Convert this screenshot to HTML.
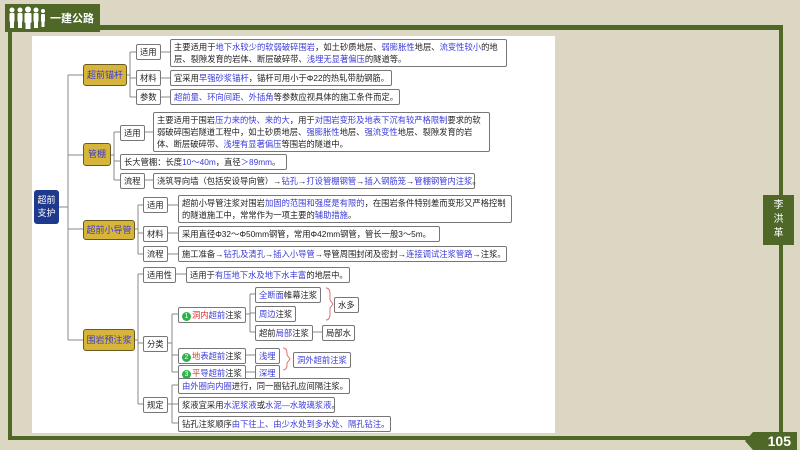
<!DOCTYPE html>
<html><head><meta charset="utf-8"><style>
*{margin:0;padding:0;box-sizing:border-box}
body{width:800px;height:450px;background:#dbd7c3;position:relative;overflow:hidden;font-family:"Liberation Sans","Noto Sans CJK SC",sans-serif;font-size:8.3px;color:#222}
.a{position:absolute}
.g{background:#4f6828}
.b{position:absolute;border:1px solid #777;border-radius:2px;background:#fff;line-height:12px;padding:1px 3px;white-space:nowrap}
.t{white-space:normal}
.y{background:#d7b53a;border:1.5px solid #6b5a20;color:#3a3ad0;border-radius:3px;text-align:center;padding:5px 0;white-space:nowrap;font-size:9px;line-height:11px}
i{font-style:normal;color:#3b3bd8}
s{text-decoration:none;color:#e03030}
.n{display:inline-block;width:9px;height:9px;border-radius:50%;background:#2cb24c;color:#fff;font-size:7px;line-height:9px;text-align:center;margin-right:1px}
</style></head><body>
<div class="a g" style="left:5px;top:4px;width:95px;height:28px"></div>
<svg class="a" style="left:7px;top:6px" width="40" height="24" fill="#fff">
<circle cx="5" cy="4" r="2.5"/><rect x="2.5" y="7" width="5" height="9" rx="1"/><rect x="3" y="15" width="4" height="7"/>
<circle cx="13" cy="4" r="2.5"/><rect x="10.5" y="7" width="5" height="9" rx="1"/><rect x="11" y="15" width="4" height="7"/>
<circle cx="21" cy="3.5" r="3"/><rect x="17.5" y="7" width="7" height="10" rx="1"/><rect x="18.5" y="16" width="5" height="7"/>
<circle cx="29" cy="4" r="2.5"/><rect x="26.5" y="7" width="5" height="9" rx="1"/><rect x="27" y="15" width="4" height="7"/>
<circle cx="36" cy="5" r="2"/><rect x="34" y="8" width="4" height="8" rx="1"/><rect x="34.5" y="15" width="3" height="6"/>
</svg>
<div class="a" style="left:50px;top:10px;color:#fff;font-size:11px;font-weight:bold">一建公路</div>
<div class="a g" style="left:100px;top:25px;width:683px;height:5px"></div>
<div class="a g" style="left:8px;top:30px;width:4px;height:410px"></div>
<div class="a g" style="left:779px;top:27px;width:4px;height:410px"></div>
<div class="a g" style="left:8px;top:436px;width:745px;height:4px"></div>
<div class="a" style="left:745px;top:432px;width:52px;height:18px;background:#4f6828;clip-path:polygon(8px 0,100% 0,100% 100%,8px 100%,0 50%);color:#fff;font-weight:bold;font-size:14px;text-align:right;padding-right:6px;line-height:18px">105</div>
<div class="a g" style="left:763px;top:195px;width:31px;height:50px;color:#fff;font-size:10px;text-align:center;line-height:14px;padding-top:4px">李<br>洪<br>革</div>
<div class="a" style="left:32px;top:36px;width:523px;height:397px;background:#fff"></div>

<svg class="a" style="left:0;top:0" width="800" height="450" fill="none" stroke="#888" stroke-width="1">
<path d="M58 207H68M68 75V340M68 75H83M68 155H83M68 229H83M68 340H83"/>
<path d="M126 75H130M130 52V97M130 52H136M130 78H136M130 97H136M160 52H170M160 78H170M160 97H170"/>
<path d="M110 155H114M114 132V180M114 132H120M114 161H120M114 180H120M144 132H153M144 180H153"/>
<path d="M134 229H138M138 205V254M138 205H143M138 233H143M138 254H143M167 205H178M167 233H178M167 254H178"/>
<path d="M134 340H138M138 274V404M138 274H143M138 343H143M138 404H143M176 274H186"/>
<path d="M167 343H172M172 314V372M172 314H178M172 355H178M172 372H178"/>
<path d="M245 314H250M250 294V332M250 294H255M250 313H255M250 332H255M311 332H322"/>
<path d="M245 355H255M245 372H255"/>
<path d="M167 404H172M172 385V423M172 385H178M172 404H178M172 423H178"/>
<path d="M326 288q4 0 4 6v6l3 4l-3 4v6q0 6-4 6" stroke="#e07070"/>
<path d="M283 348q4 0 4 5v2l3 4l-3 4v2q0 5-4 5" stroke="#e07070"/>
</svg>

<div class="a" style="left:34px;top:190px;width:25px;height:34px;background:#1f3a8c;border-radius:3px;color:#fff;text-align:center;line-height:13px;padding-top:4px;font-size:9px">超前<br>支护</div>

<div class="a y" style="left:83px;top:64px;width:44px;height:22px">超前锚杆</div>
<div class="b" style="left:136px;top:44px">适用</div>
<div class="b t" style="left:170px;top:39px;width:337px">主要适用于<i>地下水较少的软弱破碎围岩</i>，如土砂质地层、<i>弱膨胀性</i>地层、<i>流变性较小</i>的地层、裂隙发育的岩体、断层破碎带、<i>浅埋无显著偏压</i>的隧道等。</div>
<div class="b" style="left:136px;top:70px">材料</div>
<div class="b" style="left:170px;top:70px;width:222px">宜采用<i>早强砂浆锚杆</i>，锚杆可用小于Φ22的热轧带肋钢筋。</div>
<div class="b" style="left:136px;top:89px">参数</div>
<div class="b" style="left:170px;top:89px;width:230px"><i>超前量、环向间距、外插角</i>等参数应视具体的施工条件而定。</div>

<div class="a y" style="left:83px;top:143px;width:28px;height:23px">管棚</div>
<div class="b" style="left:120px;top:125px">适用</div>
<div class="b t" style="left:153px;top:112px;width:337px">主要适用于围岩<i>压力来的快、来的大</i>，用于<i>对围岩变形及地表下沉有较严格限制</i>要求的软弱破碎围岩隧道工程中，如土砂质地层、<i>强膨胀性</i>地层、<i>强流变性</i>地层、裂隙发育的岩体、断层破碎带、<i>浅埋有显著偏压</i>等围岩的隧道中。</div>
<div class="b" style="left:120px;top:154px;width:167px">长大管棚：长度<i>10～40m</i>，直径<i>＞89mm</i>。</div>
<div class="b" style="left:120px;top:173px">流程</div>
<div class="b" style="left:153px;top:173px;width:322px">浇筑导向墙（包括安设导向管）→<i>钻孔</i>→<i>打设管棚钢管</i>→<i>插入钢筋笼</i>→<i>管棚钢管内注浆</i>。</div>

<div class="a y" style="left:83px;top:220px;width:52px;height:20px;padding-top:4px">超前小导管</div>
<div class="b" style="left:143px;top:197px">适用</div>
<div class="b t" style="left:178px;top:195px;width:334px">超前小导管注浆对围岩<i>加固的范围和强度是有限的</i>，在围岩条件特别差而变形又严格控制的隧道施工中，常常作为一项主要的<i>辅助措施</i>。</div>
<div class="b" style="left:143px;top:226px">材料</div>
<div class="b" style="left:178px;top:226px;width:262px">采用直径Φ32～Φ50mm钢管，常用Φ42mm钢管，管长一般3～5m。</div>
<div class="b" style="left:143px;top:246px">流程</div>
<div class="b" style="left:178px;top:246px;width:329px">施工准备→<i>钻孔及清孔</i>→<i>插入小导管</i>→导管周围封闭及密封→<i>连接调试注浆管路</i>→注浆。</div>

<div class="a y" style="left:83px;top:329px;width:52px;height:22px">围岩预注浆</div>
<div class="b" style="left:143px;top:267px">适用性</div>
<div class="b" style="left:186px;top:267px;width:164px">适用于<i>有压地下水及地下水丰富</i>的地层中。</div>
<div class="b" style="left:143px;top:336px">分类</div>
<div class="b" style="left:178px;top:307px"><span class="n">1</span><s>洞内</s><i>超前</i>注浆</div>
<div class="b" style="left:255px;top:287px"><i>全断面</i>帷幕注浆</div>
<div class="b" style="left:255px;top:306px"><i>周边</i>注浆</div>
<div class="b" style="left:255px;top:325px">超前<i>局部</i>注浆</div>
<div class="b" style="left:322px;top:325px">局部水</div>
<div class="b" style="left:334px;top:297px">水多</div>
<div class="b" style="left:178px;top:348px"><span class="n">2</span><s>地</s><i>表超前</i>注浆</div>
<div class="b" style="left:255px;top:348px"><i>浅埋</i></div>
<div class="b" style="left:178px;top:365px"><span class="n">3</span><s>平</s><i>导超前</i>注浆</div>
<div class="b" style="left:255px;top:365px"><i>深埋</i></div>
<div class="b" style="left:293px;top:352px"><i>洞外超前注浆</i></div>
<div class="b" style="left:143px;top:397px">规定</div>
<div class="b" style="left:178px;top:378px;width:172px"><i>由外圈向内圈</i>进行，同一圈钻孔应间隔注浆。</div>
<div class="b" style="left:178px;top:397px;width:157px">浆液宜采用<i>水泥浆液</i>或<i>水泥—水玻璃浆液</i>。</div>
<div class="b" style="left:178px;top:416px;width:213px">钻孔注浆顺序<i>由下往上、由少水处到多水处、隔孔钻注</i>。</div>
</body></html>
